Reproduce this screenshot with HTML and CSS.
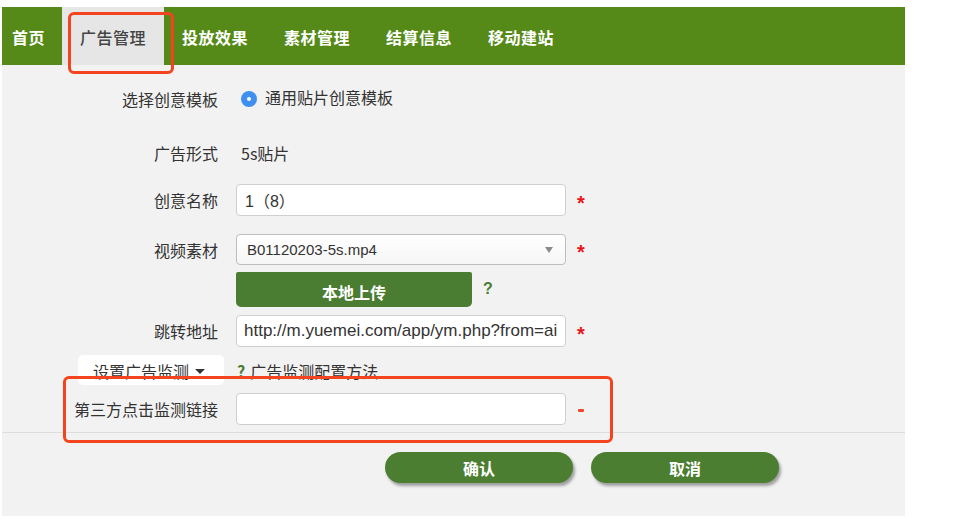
FILE: index.html
```html
<!DOCTYPE html>
<html lang="zh-CN">
<head>
<meta charset="utf-8">
<title>广告管理</title>
<link rel="stylesheet" href="styles.css">
</head>
<body>
<div class="page">
  <nav class="nav">
    <a class="tab tab-first">首页</a>
    <a class="tab tab-active">广告管理</a>
    <a class="tab">投放效果</a>
    <a class="tab">素材管理</a>
    <a class="tab">结算信息</a>
    <a class="tab">移动建站</a>
  </nav>
  <main class="panel">
    <div class="form">
      <div class="row r1">
        <span class="lbl">选择创意模板</span>
        <span class="field radio-field"><span class="radio"></span><span>通用贴片创意模板</span></span>
      </div>
      <div class="row r2">
        <span class="lbl">广告形式</span>
        <span class="field plain">5s贴片</span>
      </div>
      <div class="row r3">
        <span class="lbl">创意名称</span>
        <span class="field input">1（8）</span>
        <span class="req">*</span>
      </div>
      <div class="row r4">
        <span class="lbl">视频素材</span>
        <span class="field input select"><span>B01120203-5s.mp4</span><span class="arrow"></span></span>
        <span class="req">*</span>
      </div>
      <div class="row r5">
        <span class="lbl"></span>
        <span class="field upload-wrap"><span class="upload">本地上传</span><span class="help">?</span></span>
      </div>
      <div class="row r6">
        <span class="lbl">跳转地址</span>
        <span class="field input url">http://m.yuemei.com/app/ym.php?from=ai</span>
        <span class="req">*</span>
      </div>
      <div class="row r7">
        <span class="lbl"><span class="monitor-btn">设置广告监测<span class="caret"></span></span></span>
        <span class="field plain"><span class="help help-inline">?</span>广告监测配置方法</span>
      </div>
      <div class="row r8">
        <span class="lbl">第三方点击监测链接</span>
        <span class="field input"></span>
        <span class="minus"></span>
      </div>
    </div>
    <div class="sep"></div>
    <div class="actions">
      <span class="btn">确认</span>
      <span class="btn">取消</span>
    </div>
  </main>
  <div class="mark mark-tab"></div>
  <div class="mark mark-row"></div>
</div>
</body>
</html>
```
FILE: styles.css
```css
* { box-sizing: border-box; }
html, body { margin: 0; background: #ffffff; }
body {
  font-family: "Liberation Sans", "Noto Sans CJK SC", sans-serif;
  font-size: 16px;
  color: #333333;
}
.page {
  position: relative;
  width: 956px;
  height: 531px;
  padding: 7px 0 0 2px;
}
.nav {
  display: flex;
  width: 903px;
  height: 58px;
  background: #568a18;
}
.tab {
  display: flex;
  align-items: center;
  padding: 1px 18px 0;
  color: #ffffff;
  font-family: "Noto Sans CJK SC", sans-serif;
  font-weight: 700;
  font-size: 16px;
  letter-spacing: 0.5px;
  white-space: nowrap;
}
.tab-first { padding: 1px 17px 0 10px; }
.tab-active {
  background: #e6e6e6;
  color: #444444;
  font-weight: 500;
}
.panel {
  width: 903px;
  height: 451px;
  background: #f2f2f2;
  padding-top: 18px;
}
.form { display: flex; flex-direction: column; }
.row {
  display: grid;
  grid-template-columns: 216px 330px 40px;
  column-gap: 18px;
  align-items: center;
}
.lbl {
  text-align: right;
  font-family: "Noto Sans CJK SC", sans-serif;
  color: #333333;
  white-space: nowrap;
}
.field { font-family: "Liberation Sans", "Noto Sans CJK SC", sans-serif; }
.r1 { height: 32px; }
.r2 { height: 32px; margin-top: 22px; }
.r3 { height: 32px; margin-top: 15px; }
.r4 { height: 31px; margin-top: 18px; }
.r5 { height: 35px; margin-top: 7px; }
.r6 { height: 32px; margin-top: 8px; }
.r7 { height: 30px; margin-top: 8px; }
.r8 { height: 32px; margin-top: 8px; }
.radio-field {
  display: flex;
  align-items: center;
  gap: 8px;
  padding-left: 5px;
  font-family: "Noto Sans CJK SC", sans-serif;
  margin-top: -4px;
}
.radio {
  width: 16px;
  height: 16px;
  border-radius: 50%;
  background: #3f8ff0;
  position: relative;
  margin-top: 3px;
}
.radio::after {
  content: "";
  position: absolute;
  left: 6px;
  top: 6px;
  width: 4px;
  height: 4px;
  border-radius: 50%;
  background: #ffffff;
}
.plain { padding-left: 5px; font-family: "Noto Sans CJK SC", sans-serif; }
.input {
  height: 100%;
  display: flex;
  align-items: center;
  background: #ffffff;
  border: 1px solid #cfcfcf;
  border-radius: 4px;
  padding: 0 8px;
  color: #333333;
}
.select {
  justify-content: space-between;
  padding: 0 10px;
  background: linear-gradient(#ffffff, #f6f6f6);
  border-color: #bdbdbd;
  font-size: 15px;
}
.arrow {
  width: 0;
  height: 0;
  border-left: 4px solid transparent;
  border-right: 4px solid transparent;
  border-top: 6px solid #8a8a8a;
  margin-right: 2px;
}
.url { white-space: nowrap; overflow: hidden; font-size: 17px; padding: 0 7px; }
.req {
  color: #e8151b;
  font-size: 20px;
  font-weight: 700;
  margin-left: -7px;
  margin-top: 6px;
}
.minus {
  width: 6px;
  height: 3px;
  background: #f04a2a;
  border-radius: 1px;
  margin-left: -6px;
  margin-top: 2px;
}
.upload-wrap {
  display: flex;
  align-items: center;
  height: 100%;
}
.upload {
  width: 236px;
  height: 100%;
  display: flex;
  align-items: center;
  justify-content: center;
  background: #4a7d31;
  color: #ffffff;
  font-weight: 700;
  font-family: "Noto Sans CJK SC", sans-serif;
  border-radius: 2px 2px 5px 5px;
  padding-top: 5px;
}
.help {
  color: #4a7d31;
  font-weight: 700;
  font-size: 16px;
  margin-left: 11px;
  margin-top: -2px;
}
.help-inline { margin: 0 5px 0 0; }
.r7 .lbl { display: flex; justify-content: flex-end; height: 100%; }
.monitor-btn {
  display: flex;
  align-items: center;
  gap: 6px;
  height: 100%;
  width: 146px;
  margin-right: -6px;
  padding-left: 15px;
  padding-top: 1px;
  background: #ffffff;
  border-radius: 5px;
  font-family: "Noto Sans CJK SC", sans-serif;
}
.caret {
  width: 0;
  height: 0;
  border-left: 5px solid transparent;
  border-right: 5px solid transparent;
  border-top: 5px solid #333333;
  margin-top: 2px;
}
.r7 .plain { padding-left: 1px; padding-top: 2px; }
.sep {
  height: 1px;
  background: #dedede;
  margin-top: 7px;
}
.actions {
  display: flex;
  gap: 18px;
  padding-left: 383px;
  margin-top: 19px;
}
.btn {
  width: 188px;
  height: 31px;
  display: flex;
  align-items: center;
  justify-content: center;
  background: #4b7e31;
  color: #ffffff;
  font-weight: 700;
  font-family: "Noto Sans CJK SC", sans-serif;
  border-radius: 16px;
  box-shadow: 2px 3px 3px rgba(0, 0, 0, 0.35);
}
.mark {
  position: absolute;
  border: 3px solid #f4441f;
  border-radius: 6px;
}
.mark-tab { left: 68px; top: 12px; width: 106px; height: 62px; }
.mark-row { left: 63px; top: 376px; width: 550px; height: 67px; }
```
